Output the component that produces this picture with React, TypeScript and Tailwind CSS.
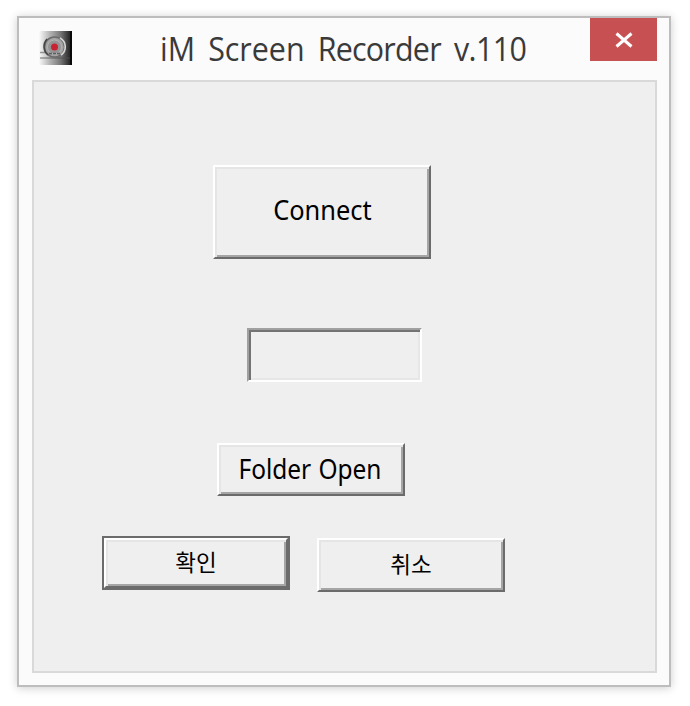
import type { ReactNode } from "react";

function AppIcon() {
  return (
    <svg className="ml-5 mt-[13px] h-[34px] w-[33px] shrink-0" viewBox="0 0 33 34">
      <defs>
        <linearGradient id="metal" x1="0" x2="1" y1="0" y2="0">
          <stop offset="0" stopColor="#fafafa" />
          <stop offset="0.3" stopColor="#b9b9b9" />
          <stop offset="0.65" stopColor="#777777" />
          <stop offset="0.94" stopColor="#262626" />
          <stop offset="0.95" stopColor="#080808" />
          <stop offset="1" stopColor="#080808" />
        </linearGradient>
      </defs>
      <rect width="33" height="34" fill="url(#metal)" />
      <path d="M1 21.5h8M1 27h30" stroke="#505050" strokeWidth="1.5" opacity="0.55" />
      <circle cx="15.5" cy="16" r="10" fill="#a3a3a3" stroke="#6b6b6b" strokeWidth="1.6" />
      <path d="M9 24a11 11 0 0 1-1-16" fill="none" stroke="#444444" strokeWidth="1.5" />
      <path d="M21 7a10 10 0 0 1 1 17" fill="none" stroke="#d5d5d5" strokeWidth="1.6" />
      <circle cx="15.5" cy="16" r="7" fill="#949494" stroke="#b4b4b4" />
      <path d="M10 22.5h12" stroke="#5e5e5e" strokeWidth="1.6" strokeDasharray="3 1" />
      <circle cx="15.5" cy="16" r="3.5" fill="#c82333" />
    </svg>
  );
}

function Button({ className, children }: { className: string; children: ReactNode }) {
  return (
    <button
      className={`flex items-center justify-center whitespace-nowrap border-2 border-b-[#6b6b6b] border-l-white border-r-[#6b6b6b] border-t-white bg-[#efefef] text-black shadow-[inset_2px_2px_0_#e5e5e5,inset_-2px_-2px_0_#a5a5a5] ${className}`}
    >
      {children}
    </button>
  );
}

export default function App() {
  return (
    <div className="h-[706px] w-[690px] overflow-hidden bg-white pl-[17px] pt-4 font-['Noto_Sans','Noto_Sans_CJK_KR',sans-serif]">
      <main className="h-[671px] w-[654px] border-2 border-[#bdbdbd] bg-[#fbfbfb] shadow-[0_1px_9px_rgba(0,0,0,0.2)]">
        <header className="flex h-[62px] items-start">
          <AppIcon />
          <h1 className="ml-[88px] mt-[9px] w-[368px] whitespace-nowrap font-['Open_Sans',sans-serif] text-[32px] font-normal leading-[44px] text-[#3a3a3a]">
            <span className="inline-block origin-left scale-x-[0.95] [word-spacing:5.5px]">
              iM Screen <span className="tracking-[-0.8px]">Recorder</span> <span className="tracking-[-0.6px]">v.110</span>
            </span>
          </h1>
          <button aria-label="Close" className="ml-[62px] flex h-[43px] w-[67px] items-center justify-center bg-[#c75052] pt-px">
            <svg className="h-4 w-[18px]" viewBox="0 0 18 16">
              <path d="M1.5 1.5 16.5 14.5M16.5 1.5 1.5 14.5" stroke="white" strokeWidth="3" />
            </svg>
          </button>
        </header>
        <section className="ml-[13px] flex h-[593px] w-[625px] flex-col items-start border-2 border-[#d9d9d9] bg-[#efefef]">
          <Button className="ml-[179px] mt-[83px] h-[94px] w-[218px] pb-[3px] text-[27px]">
            <span className="inline-block scale-x-[0.94]">Connect</span>
          </Button>
          <div className="ml-[213px] mt-[69px] h-[54px] w-[175px] border-2 border-b-white border-l-[#a0a0a0] border-r-white border-t-[#a0a0a0] shadow-[inset_2px_2px_0_#737373,inset_-2px_-2px_0_#e7e7e7]" />
          <Button className="ml-[183px] mt-[61px] h-[53px] w-[188px] pr-0.5 text-[27px]">
            <span className="inline-block scale-x-[0.905] [word-spacing:1px]">Folder Open</span>
          </Button>
          <div className="ml-[68px] mt-10 flex items-start gap-[27px]">
            <div className="h-[54px] w-[188px] border-2 border-[#6b6b6b]">
              <Button className="h-[50px] w-[184px] pb-[3px] text-[22.5px]">
                <span className="font-['Noto_Sans_CJK_KR',sans-serif]">확인</span>
              </Button>
            </div>
            <Button className="mt-0.5 h-[54px] w-[188px] pb-[3px] text-[22.5px]">
              <span className="font-['Noto_Sans_CJK_KR',sans-serif]">취소</span>
            </Button>
          </div>
        </section>
      </main>
    </div>
  );
}
